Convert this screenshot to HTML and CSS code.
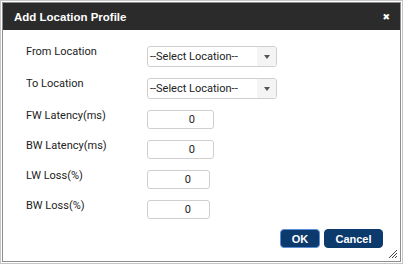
FILE: index.html
```html
<!DOCTYPE html>
<html lang="en">
<head>
    <meta charset="UTF-8">
    <title>Add Location Profile</title>
    <link rel="stylesheet" href="styles.css">
</head>
<body>
    <div class="dialog">
        <div class="dialog-inner">
            <div class="title-bar">
                <span class="title">Add Location Profile</span>
                <span class="close-btn">&#10006;</span>
            </div>
            <form class="dialog-body">
                <div class="fields">
                    <label class="field-label">From Location</label>
                    <div class="select-box">
                        <span class="select-text">--Select Location--</span>
                        <span class="select-arrow"></span>
                    </div>

                    <label class="field-label">To Location</label>
                    <div class="select-box">
                        <span class="select-text">--Select Location--</span>
                        <span class="select-arrow"></span>
                    </div>

                    <label class="field-label">FW Latency(ms)</label>
                    <input type="text" class="num-input" value="0">

                    <label class="field-label">BW Latency(ms)</label>
                    <input type="text" class="num-input" value="0">

                    <label class="field-label">LW Loss(%)</label>
                    <input type="text" class="num-input short" value="0">

                    <label class="field-label">BW Loss(%)</label>
                    <input type="text" class="num-input short" value="0">
                </div>
                <div class="actions">
                    <button type="button" class="btn btn-ok">OK</button>
                    <button type="button" class="btn">Cancel</button>
                </div>
            </form>
            <svg class="grip" width="8" height="8" viewBox="0 0 8 8">
                <path d="M8 0 L0 8 M8 3 L3 8 M8 6 L6 8" stroke="#444" stroke-width="1"/>
            </svg>
        </div>
    </div>
</body>
</html>
```

FILE: styles.css
```css
body {
    margin: 0;
    font-family: Roboto, "Liberation Sans", sans-serif;
}
.dialog {
    width: 403px;
    height: 264px;
    box-sizing: border-box;
    border: 1px solid #c6c6c6;
    padding: 1px;
    background: #fff;
}
.dialog-inner {
    position: relative;
    height: 100%;
    box-sizing: border-box;
    border: 1px solid #8e8e8e;
}
.title-bar {
    height: 27px;
    background-color: #2b2b2b;
    display: flex;
    align-items: center;
    justify-content: space-between;
    padding: 0 10px 0 11px;
}
.title {
    color: #fff;
    font-family: "Liberation Sans", Arial, sans-serif;
    font-weight: bold;
    font-size: 11.5px;
}
.close-btn {
    color: #fff;
    font-size: 9px;
    font-family: "DejaVu Sans", sans-serif;
}
.dialog-body {
    padding: 16px 17px 0 23px;
}
.fields {
    display: grid;
    grid-template-columns: 121px auto;
    align-items: start;
    row-gap: 11px;
}
.field-label {
    font-size: 11px;
    line-height: 14px;
    color: #222;
    margin-top: -1px;
}
.select-box {
    width: 130px;
    height: 21px;
    box-sizing: border-box;
    border: 1px solid #cfcfcf;
    border-radius: 3px;
    display: flex;
    overflow: hidden;
}
.select-text {
    flex: 1;
    font-size: 11px;
    line-height: 19px;
    padding-left: 2px;
    color: #222;
}
.select-arrow {
    width: 19px;
    background: #f4f4f4;
    position: relative;
}
.select-arrow::after {
    content: "";
    position: absolute;
    left: 7px;
    top: 8px;
    border-left: 3px solid transparent;
    border-right: 3px solid transparent;
    border-top: 4px solid #555;
}
.num-input {
    width: 67px;
    height: 19px;
    box-sizing: border-box;
    border: 1px solid #cfcfcf;
    border-radius: 3px;
    font-family: Roboto, sans-serif;
    font-size: 11px;
    text-align: right;
    padding: 0 18px 0 0;
    color: #222;
    margin: 0;
}
.num-input.short {
    width: 63px;
}
.actions {
    display: flex;
    justify-content: flex-end;
    gap: 4px;
    margin-top: 10px;
}
.btn {
    height: 19px;
    width: 59px;
    padding: 0;
    background-color: #0c3a6d;
    color: #fff;
    border: 1px solid #0c3a6d;
    border-radius: 4px;
    font-family: "Liberation Sans", Arial, sans-serif;
    font-weight: bold;
    font-size: 11px;
    cursor: pointer;
}
.btn-ok {
    width: 40px;
    border-color: #5a8fd6;
}
.grip {
    position: absolute;
    right: 3px;
    bottom: 3px;
}
```
